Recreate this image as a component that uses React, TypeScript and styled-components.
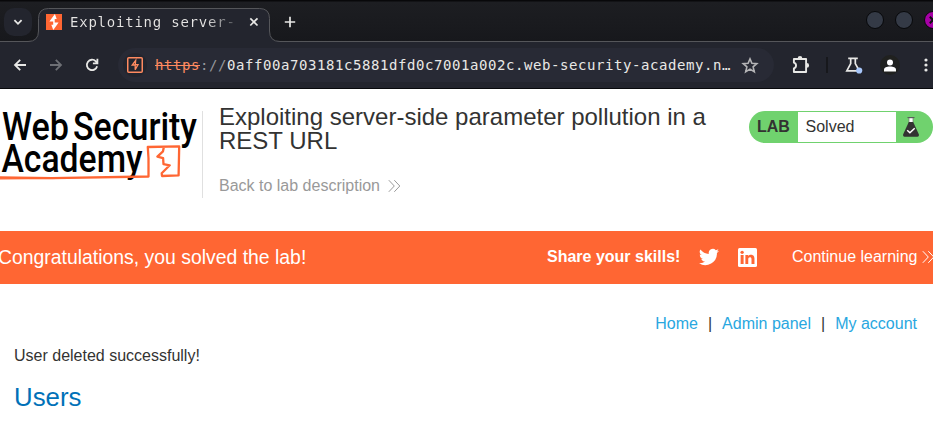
import React from "react";
import styled, { createGlobalStyle } from "styled-components";

const Global = createGlobalStyle`
  * { box-sizing: border-box; }
  body { margin: 0; background: #fff; overflow: hidden; }
`;
const Window = styled.div`
  width: 933px; height: 422px; overflow: hidden; background: #fff;
  font: 16px/20px "Liberation Sans", Arial, sans-serif; color: #333332;
`;
const TitleBar = styled.div`
  height: 41px; display: flex; padding-top: 8px; padding-left: 4px;
  background: linear-gradient(#08080a 0 1px, #1d1e22 2px, #17181c 100%);
`;
const TabMenu = styled.div`
  width: 28px; height: 28px; border-radius: 10px; background: #23252e;
  display: grid; place-items: center;
`;
const Tab = styled.div`
  position: relative; z-index: 0; width: 232px; height: 34px; margin-left: 6px; flex: none;
  display: flex; align-items: center; padding: 0 10px 6px 8px;
`;
const TabShape = styled.svg`position: absolute; left: -12px; top: 0; z-index: -1;`;
const TabTitle = styled.span`
  font: 14px/20px "DejaVu Sans Mono", monospace; letter-spacing: 0.77px; white-space: pre;
  margin-left: 8px; width: 179px; height: 20px; overflow: hidden; flex: none;
  color: transparent; background: linear-gradient(90deg, #e6e5e4 0 135px, #494b51 166px); background-clip: text;
`;
const NewTab = styled.div`margin: 8px 0 0 14px; height: 12px; display: flex;`;
const WindowControls = styled.div`
  margin-left: auto; display: flex; gap: 11px; padding-top: 3px; margin-right: -9px;
`;
const WindowDot = styled.div<{ $close?: boolean }>`
  width: 18px; height: 18px; border-radius: 50%; border: 1px solid #07080a;
  background: ${(p) => (p.$close ? "#a600a6" : "#343a46")};
  display: grid; place-items: center;
`;
const Toolbar = styled.div`
  height: 48px; border-top: 1px solid #55565a; border-bottom: 1px solid #08090c;
  background: #23252e; display: flex; align-items: center;
  padding-left: 12px;
`;
const ToolIcon = styled.div<{ $gap: number }>`
  display: flex; flex: none; margin-left: ${(p) => p.$gap}px;
`;
const Address = styled.div`
  width: 656px; height: 34px; margin-left: 18px; border-radius: 17px; flex: none;
  background: #282a35; display: flex; align-items: center; padding-left: 5px;
`;
const SiteBadge = styled.div`
  width: 24px; height: 24px; border-radius: 50%; background: #23252e;
  display: grid; place-items: center;
`;
const Url = styled.div`
  font: 14px/20px "DejaVu Sans Mono", monospace; letter-spacing: 0.572px;
  color: #e8e8e6; white-space: pre; margin-left: 8px; width: 577px;
`;
const Insecure = styled.span`color: #ff8a60; text-decoration: line-through;`;
const Muted = styled.span`color: #97989c;`;
const Divider = styled.div`width: 2px; height: 16px; background: #17181c; margin-left: 15px;`;
const Avatar = styled.div`
  width: 20px; height: 20px; border-radius: 50%; background: #20211f; flex: none;
  margin-left: 17px; display: grid; place-items: center;
`;
const LabHeader = styled.header`height: 142px; display: flex; align-items: flex-start; padding-top: 16px;`;
const Logo = styled.svg`display: block; flex: none; margin-top: 6px;`;
const Heading = styled.div`
  width: 547px; height: 87px; margin-top: 6px; padding-left: 16px; border-left: 1px solid #e0e0e0;
`;
const Title = styled.h2`
  margin: -6px 0 0; width: 510px; font-size: 24px; line-height: 24px; font-weight: 400;
`;
const BackLink = styled.a`
  display: flex; align-items: center; margin-top: 23px; color: #999; gap: 8px;
`;
const Status = styled.div`
  width: 184px; height: 32px; margin-top: 6px; flex: none; border-radius: 16px; background: #70d26e;
  display: flex; align-items: center;
`;
const StatusLabel = styled.b`width: 49px; padding-left: 8px;`;
const StatusValue = styled.span`
  width: 98px; height: 30px; line-height: 30px; background: #fff; padding-left: 7.5px;
`;
const Flask = styled.svg`margin: 0 0 0 7px;`;
const Banner = styled.section`
  height: 53px; background: #ff6633; color: #fff; display: flex; align-items: center;
  padding-bottom: 1px;
`;
const Congrats = styled.span`font-size: 19.4px; margin-left: -2px; width: 549px; flex: none; white-space: nowrap;`;
const Share = styled.b`width: 152px; flex: none;`;
const Social = styled.svg<{ $gap: number }>`flex: none; margin-right: ${(p) => p.$gap}px;`;
const Continue = styled.a`display: flex; gap: 5px; align-items: center; white-space: nowrap;`;
const Nav = styled.nav`
  display: flex; justify-content: flex-end; padding: 30px 16px 0 0; gap: 10px;
`;
const NavLink = styled.a`color: #29a7df;`;
const Content = styled.main`padding: 12px 14px;`;
const Message = styled.p`margin: 0;`;
const Users = styled.h1`margin: 15px 0 0; font-size: 25.8px; line-height: 32px; font-weight: 400; color: #0071b8;`;

const Chevrons = ({ color }: { color: string }) => (
  <svg width="13" height="14" viewBox="0 0 13 14" fill="none" stroke={color} strokeWidth="1">
    <path d="M.8 1.2 6.3 7 .8 12.8M6.3 1.2 11.8 7l-5.5 5.8" />
  </svg>
);

export default function App() {
  return (
    <Window>
      <Global />
      <TitleBar>
        <TabMenu>
          <svg width="10" height="7" fill="none" stroke="#e8e8e6" strokeWidth="1.8"><path d="m1.4 1.2 3.6 3.6 3.6-3.6" /></svg>
        </TabMenu>
        <Tab>
          <TabShape width="256" height="34">
            <path d="M0 34v-.5h2q10.500 0 10.500-10.500v-12.500q0-10 10-10h211q10 0 10 10v12.500q0 10.500 10.500 10.500h2v.5z" fill="#23252e" />
            <path d="M0 33.500h2q10.500 0 10.500-10.500v-12.500q0-10 10-10h211q10 0 10 10v12.500q0 10.500 10.500 10.500h2" fill="none" stroke="#55565a" />
          </TabShape>
          <svg width="16" height="16" viewBox="0 0 16 16">
            <path fill="#ff6633" d="M0 0h16v16H0z" />
            <path fill="#fff" d="M8.900 0 3.400 7.600h3.800v3.100H5.300L7.300 16l5.300-7.500H8.700V5.100h2z" />
          </svg>
          <TabTitle>Exploiting server-</TabTitle>
          <svg width="10" height="10" stroke="#e8e8e6" strokeWidth="1.7"><path d="m1.300 1.300 7.200 7.200m0-7.200L1.300 8.500" /></svg>
        </Tab>
        <NewTab>
          <svg width="12" height="12" stroke="#e8e8e6" strokeWidth="1.7"><path d="M6 .8v10.400M.8 6h10.400" /></svg>
        </NewTab>
        <WindowControls>
          <WindowDot />
          <WindowDot />
          <WindowDot $close>
            <svg width="8" height="8" stroke="#111" strokeWidth="2"><path d="m.8.8 6.400 6.400m0-6.400L.8 7.200" /></svg>
          </WindowDot>
        </WindowControls>
      </TitleBar>
      <Toolbar>
        <ToolIcon $gap={0}>
          <svg width="16" height="14" fill="none" stroke="#e8e8e6" strokeWidth="1.8"><path d="M14 7H3m5.200-5.200L3 7l5.200 5.200" /></svg>
        </ToolIcon>
        <ToolIcon $gap={20}>
          <svg width="16" height="14" fill="none" stroke="#6e7075" strokeWidth="1.8"><path d="M2 7h11M7.800 1.800 13 7l-5.200 5.200" /></svg>
        </ToolIcon>
        <ToolIcon $gap={20}>
          <svg width="16" height="16" fill="none" stroke="#e8e8e6" strokeWidth="1.8"><path d="M13.100 9.200A5.200 5.200 0 1 1 11.800 4.300L13.200 6M13.400 1.800v4.500H8.900" /></svg>
        </ToolIcon>
        <Address>
          <SiteBadge>
            <svg width="16" height="16" fill="none" stroke="#ff8a60" strokeWidth="1.5">
              <rect x=".75" y=".75" width="14.5" height="14.5" rx="1" />
              <path strokeWidth="1.3" d="M8.700 3.300 5.200 8h3v4.700L11 7.600H8.300z" />
            </svg>
          </SiteBadge>
          <Url><Insecure>https</Insecure><Muted>://</Muted>0aff00a703181c5881dfd0c7001a002c.web-security-academy.n…</Url>
          <ToolIcon $gap={9}>
            <svg width="18" height="17" viewBox="-1 0 18 17" fill="none" stroke="#b4b4b6" strokeWidth="1.6"><path d="m8 1.900 1.900 4.400 4.900.4-3.700 3.200 1.200 4.800L8 12.100l-4.300 2.600 1.200-4.800L1.200 6.700l4.900-.4z" /></svg>
          </ToolIcon>
        </Address>
        <ToolIcon $gap={17}>
          <svg width="20" height="20" fill="none" stroke="#e8e8e6" strokeWidth="1.9">
            <path d="M2.900 4h12.200v13H2.900v-3.700a2.900 2.900 0 0 0 0-5.600z" strokeLinejoin="round" />
            <path fill="#e8e8e6" stroke="none" d="M6.700 3.300a2.300 2.300 0 0 1 4.600 0zM15.800 8.100a2.300 2.300 0 0 1 0 4.600z" />
          </svg>
        </ToolIcon>
        <Divider />
        <ToolIcon $gap={17}>
          <svg width="18" height="18" fill="none" stroke="#e8e8e6" strokeWidth="1.7">
            <path d="M3.200 2.400h9.600M5.700 2.400v5.200L1.800 14.800h12.600L10.300 7.600V2.400" />
            <circle cx="14.2" cy="14.5" r="3.1" fill="#a8c7fa" stroke="none" />
          </svg>
        </ToolIcon>
        <Avatar>
          <svg width="12" height="13" fill="#fff"><circle cx="6" cy="3.4" r="3" /><path d="M0 12.500v-2C0 8.500 2.600 7.400 6 7.400s6 1.100 6 3.100v2z" /></svg>
        </Avatar>
        <ToolIcon $gap={24}>
          <svg width="4" height="14" fill="#e8e8e6"><circle cx="2" cy="2" r="1.6" /><circle cx="2" cy="7" r="1.6" /><circle cx="2" cy="12" r="1.6" /></svg>
        </ToolIcon>
      </Toolbar>
      <LabHeader>
        <Logo width="202" height="76" viewBox="0 0 202 76" fontFamily="Roboto, sans-serif" fontWeight="500" fontSize="38" fill="#000">
          <text x="2" y="29" textLength="67" lengthAdjust="spacingAndGlyphs">Web</text>
          <text x="73" y="29" textLength="124" lengthAdjust="spacingAndGlyphs">Security</text>
          <text x="1.5" y="61.3" textLength="141" lengthAdjust="spacingAndGlyphs">Academy</text>
          <g fill="none" stroke="#ff6633" strokeWidth="2.3" strokeLinejoin="round">
            <path d="M0 66.500 52 67.200 148.500 65.500V47.500L147.800 36l31.400-.6-.6 29-16.600.6-.3-2.800 8-7.900-6.200-1.100-.4-6-5.700-1.600 5.600-5.300.8-4" />
            <path d="M0 67.800 58 67.500" strokeWidth="1.2" />
          </g>
        </Logo>
        <Heading>
          <Title>Exploiting server-side parameter pollution in a REST URL</Title>
          <BackLink>Back to lab description <Chevrons color="#999" /></BackLink>
        </Heading>
        <Status>
          <StatusLabel>LAB</StatusLabel>
          <StatusValue>Solved</StatusValue>
          <Flask width="16" height="20" viewBox="0 0 16 20">
            <path fill="#fff" stroke="#777" strokeWidth=".7" d="M6 .7h4v5H6z" />
            <path stroke="#555" strokeWidth="1" d="M4.500.6h7" />
            <path fill="#333332" d="M5.800 5h4.400l5.600 12.200c.4 1-.1 2.500-1.300 2.500H1.500C.3 19.700-.2 18.200.2 17.200z" />
            <path fill="none" stroke="#fff" strokeWidth="1.5" d="m4.200 13.300 2.700 2.400 4.800-4.500" />
          </Flask>
        </Status>
      </LabHeader>
      <Banner>
        <Congrats>Congratulations, you solved the lab!</Congrats>
        <Share>Share your skills!</Share>
        <Social $gap={19} width="20" height="18" viewBox="0 1.5 24 21" fill="#fff">
          <path d="M24 4.600a10 10 0 0 1-2.800.8 5 5 0 0 0 2.100-2.700 10 10 0 0 1-3.100 1.200 4.900 4.900 0 0 0-8.400 4.500A14 14 0 0 1 1.700 3.100a4.900 4.900 0 0 0 1.500 6.600 5 5 0 0 1-2.200-.6v.1a4.900 4.900 0 0 0 3.900 4.800 5 5 0 0 1-2.200.1 4.900 4.900 0 0 0 4.600 3.400A10 10 0 0 1 0 19.500 14 14 0 0 0 21.500 7.100 10 10 0 0 0 24 4.600z" />
        </Social>
        <Social $gap={35} width="19" height="19" viewBox="0 0 18 19" preserveAspectRatio="none">
          <rect width="18" height="19" rx="1.5" fill="#fff" />
          <path fill="#ff6633" d="M2.500 7h2.800v9H2.500zM7 7h2.700v1.200c1.200-2.100 5.900-2 5.900 2.300V16h-2.800v-4.800c0-2.700-3.100-2.500-3.100 0V16H7z" />
          <circle cx="3.9" cy="4.300" r="1.6" fill="#ff6633" />
        </Social>
        <Continue>Continue learning <Chevrons color="#fff" /></Continue>
      </Banner>
      <Nav>
        <NavLink>Home</NavLink><span>|</span><NavLink>Admin panel</NavLink><span>|</span><NavLink>My account</NavLink>
      </Nav>
      <Content>
        <Message>User deleted successfully!</Message>
        <Users>Users</Users>
      </Content>
    </Window>
  );
}
